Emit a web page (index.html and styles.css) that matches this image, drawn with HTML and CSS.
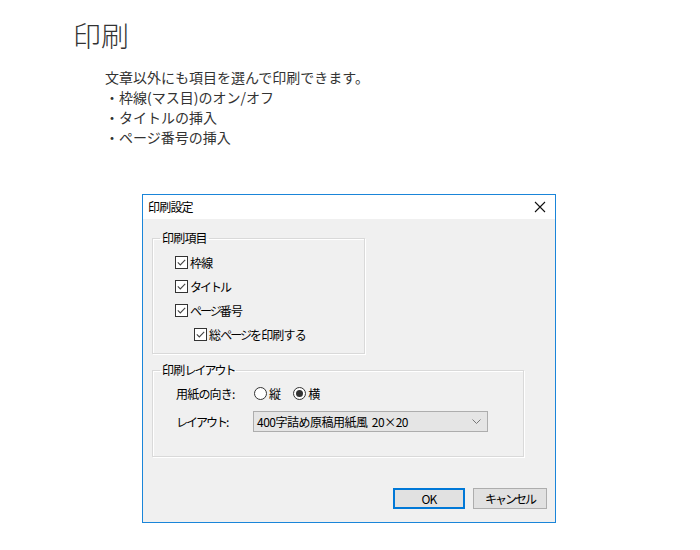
FILE: index.html
```html
<!DOCTYPE html>
<html lang="ja">
<head>
    <meta charset="UTF-8">
    <title>印刷</title>
    <link rel="stylesheet" href="styles.css">
</head>
<body>
    <h1 class="page-title">印刷</h1>
    <p class="intro">
        文章以外にも項目を選んで印刷できます。<br>
        ・枠線(マス目)のオン/オフ<br>
        ・タイトルの挿入<br>
        ・ページ番号の挿入
    </p>

    <div class="dialog">
        <div class="titlebar">
            <span class="titlebar-text">印刷設定</span>
            <svg class="close-icon" width="12" height="12" viewBox="0 0 12 12">
                <path d="M1 1L11 11M11 1L1 11" stroke="#111" stroke-width="1.1" fill="none"/>
            </svg>
        </div>
        <div class="dialog-body">
            <fieldset class="group group-items">
                <legend>印刷項目</legend>
                <div class="group-body">
                    <div class="check-row">
                        <svg class="box" width="13" height="13" viewBox="0 0 13 13"><rect x="0.5" y="0.5" width="12" height="12" fill="#fff" stroke="#333"/><path d="M2.8 6.4L5.3 8.9L10.2 3.8" stroke="#444" stroke-width="1.1" fill="none"/></svg>
                        <span>枠線</span>
                    </div>
                    <div class="check-row">
                        <svg class="box" width="13" height="13" viewBox="0 0 13 13"><rect x="0.5" y="0.5" width="12" height="12" fill="#fff" stroke="#333"/><path d="M2.8 6.4L5.3 8.9L10.2 3.8" stroke="#444" stroke-width="1.1" fill="none"/></svg>
                        <span class="kana">タイトル</span>
                    </div>
                    <div class="check-row">
                        <svg class="box" width="13" height="13" viewBox="0 0 13 13"><rect x="0.5" y="0.5" width="12" height="12" fill="#fff" stroke="#333"/><path d="M2.8 6.4L5.3 8.9L10.2 3.8" stroke="#444" stroke-width="1.1" fill="none"/></svg>
                        <span><span class="kana">ページ</span>番号</span>
                    </div>
                    <div class="check-row sub">
                        <svg class="box" width="13" height="13" viewBox="0 0 13 13"><rect x="0.5" y="0.5" width="12" height="12" fill="#fff" stroke="#333"/><path d="M2.8 6.4L5.3 8.9L10.2 3.8" stroke="#444" stroke-width="1.1" fill="none"/></svg>
                        <span>総<span class="kana">ページ</span>を印刷する</span>
                    </div>
                </div>
            </fieldset>

            <fieldset class="group group-layout">
                <legend>印刷<span class="kana">レイアウト</span></legend>
                <div class="group-body">
                    <div class="form-row">
                        <span class="label">用紙の向き:</span>
                        <span class="radio">
                            <svg width="13" height="13" viewBox="0 0 13 13"><circle cx="6.5" cy="6.5" r="6" fill="#fff" stroke="#333"/></svg>
                            <span>縦</span>
                        </span>
                        <span class="radio">
                            <svg width="13" height="13" viewBox="0 0 13 13"><circle cx="6.5" cy="6.5" r="6" fill="#fff" stroke="#333"/><circle cx="6.5" cy="6.5" r="3.5" fill="#333"/></svg>
                            <span>横</span>
                        </span>
                    </div>
                    <div class="form-row second">
                        <span class="label kana">レイアウト:</span>
                        <div class="combo">
                            <span>400字詰め原稿用紙風&nbsp;&nbsp;20×20</span>
                            <svg width="9" height="5" viewBox="0 0 9 5"><path d="M0.5 0.5L4.5 4.5L8.5 0.5" stroke="#777" fill="none"/></svg>
                        </div>
                    </div>
                </div>
            </fieldset>

            <div class="buttons">
                <button class="btn btn-default">OK</button>
                <button class="btn"><span class="kana">キャンセル</span></button>
            </div>
        </div>
    </div>
</body>
</html>
```

FILE: styles.css
```css
body {
    margin: 0;
    background: #fff;
    font-family: "Noto Sans CJK JP", "Noto Sans", sans-serif;
    color: #333;
}
.page-title {
    margin: 0;
    padding: 17px 0 0 73px;
    font-size: 28px;
    font-weight: 300;
    line-height: 36px;
    color: #333;
}
.intro {
    margin: 14px 0 0 0;
    padding-left: 105px;
    font-size: 14px;
    line-height: 20px;
    color: #333;
}
.dialog {
    margin: 47px 0 0 142px;
    width: 412px;
    border: 1px solid #1a85d9;
    background: #f0f0f0;
    color: #000;
    font-size: 12px;
    letter-spacing: -0.8px;
}
.kana {
    letter-spacing: -2px;
}
.titlebar {
    height: 24px;
    background: #fff;
    display: flex;
    align-items: center;
    justify-content: space-between;
    padding: 0 9px 0 5px;
}
.titlebar-text {
    line-height: 24px;
}
.dialog-body {
    padding: 11px 8px 13px 9px;
}
.group {
    margin: 0;
    padding: 0;
    border: 1px solid #d9d9d9;
    box-shadow: inset 1px 1px 0 #fff, 1px 1px 0 #fff;
    min-width: 0;
    box-sizing: border-box;
}
.group legend {
    margin-left: 7px;
    padding: 0 2px;
    line-height: 16px;
}
.group-items {
    width: 213px;
}
.group-items .group-body {
    padding: 4px 0 7px 22px;
}
.group-layout {
    margin-top: 8px;
    width: 372px;
}
.group-layout .group-body {
    padding: 3px 0 23px 23px;
}
.check-row {
    height: 24px;
    display: flex;
    align-items: center;
    gap: 2px;
}
.check-row.sub {
    padding-left: 19px;
}
.form-row {
    height: 24px;
    display: flex;
    align-items: center;
}
.form-row.second {
    margin-top: 4px;
}
.label {
    width: 77px;
}
.radio {
    display: inline-flex;
    align-items: center;
    gap: 2px;
    margin-left: 1px;
    margin-right: 12px;
}
.combo {
    width: 235px;
    height: 21px;
    box-sizing: border-box;
    border: 1px solid #adadad;
    background: #e5e5e5;
    display: flex;
    align-items: center;
    justify-content: space-between;
    padding: 0 6px 0 3px;
    letter-spacing: -0.5px;
}
.buttons {
    margin-top: 31px;
    display: flex;
    justify-content: flex-end;
    gap: 8px;
}
.btn {
    height: 21px;
    width: 74px;
    box-sizing: border-box;
    border: 1px solid #adadad;
    background: #e1e1e1;
    font-family: "Noto Sans CJK JP", "Noto Sans", sans-serif;
    font-size: 12px;
    letter-spacing: -0.8px;
    color: #000;
    padding: 0;
}
.btn-default {
    width: 72px;
    border: 2px solid #0078d7;
}
```
